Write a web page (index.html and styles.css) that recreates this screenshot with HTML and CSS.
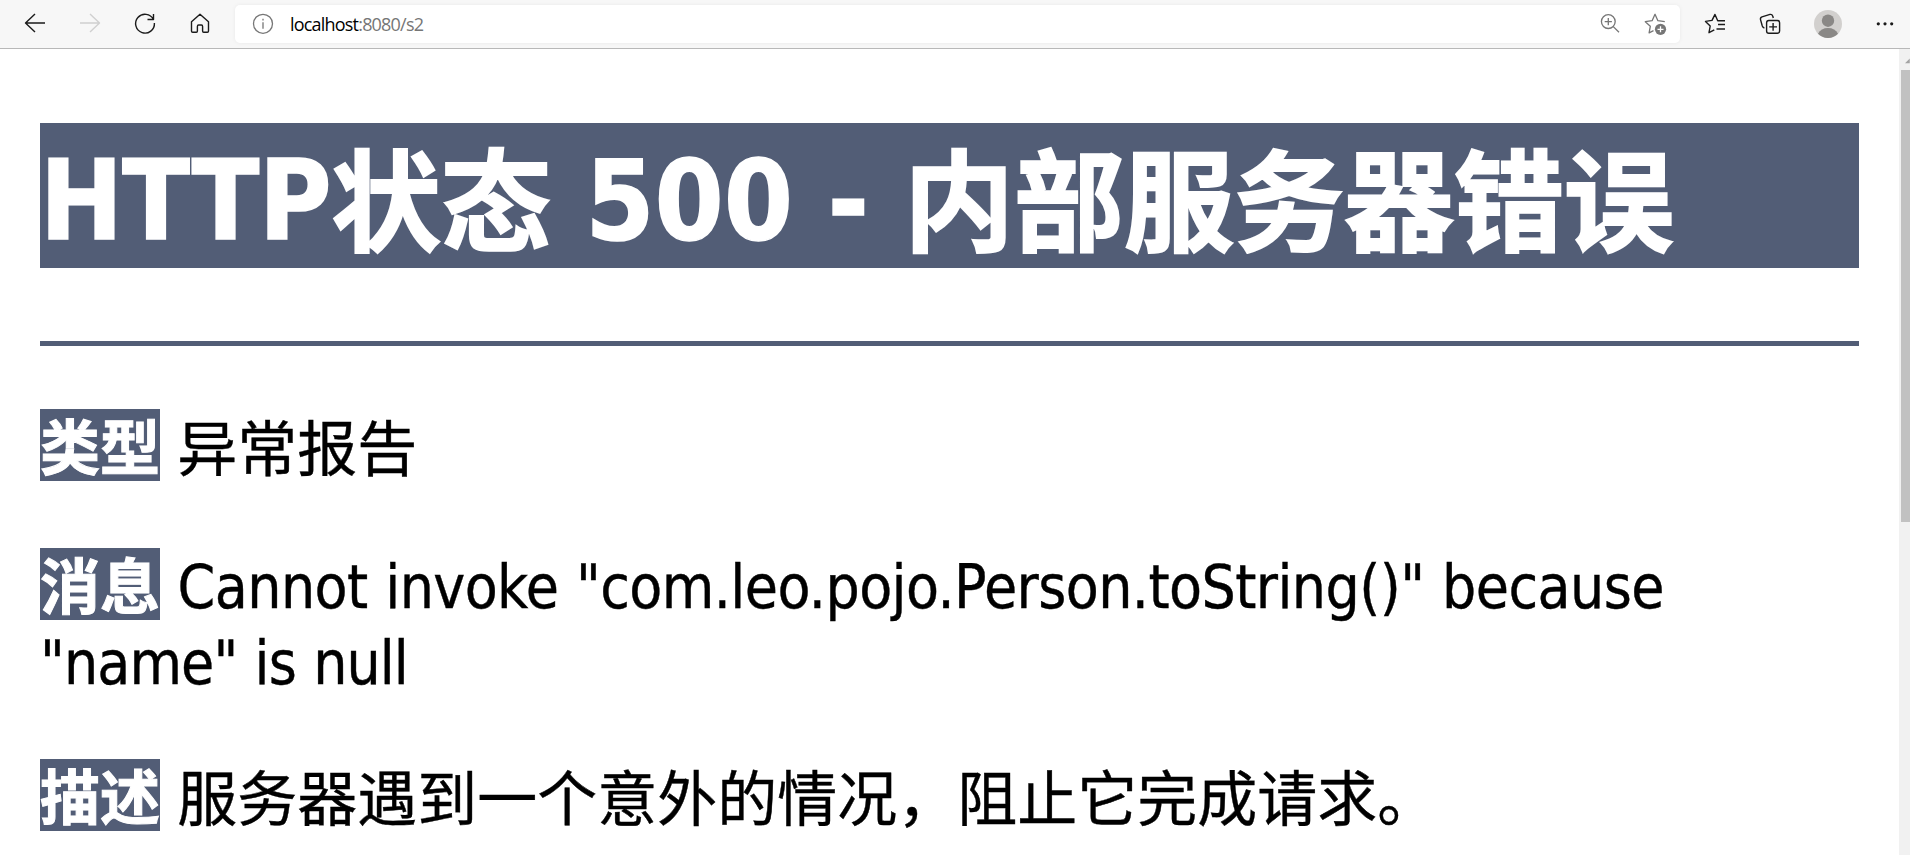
FILE: index.html
```html
<!DOCTYPE html>
<html lang="zh">
<head>
    <meta charset="UTF-8">
    <title>HTTP状态 500 - 内部服务器错误</title>
    <link rel="stylesheet" href="styles.css">
</head>
<body>
    <header class="toolbar">
        <nav class="nav-buttons">
            <svg class="icon" viewBox="0 0 24 24"><path d="M22 11H2.5M12 2L2.5 11L12 20"/></svg>
            <svg class="icon disabled" viewBox="0 0 24 24"><path d="M2 11H21.5M12 2L21.5 11L12 20"/></svg>
            <svg class="icon" viewBox="0 0 24 24"><path d="M20.4 7.4A9.4 9.4 0 1 0 21.4 11M20.5 2V7.5H14.5"/></svg>
            <svg class="icon" viewBox="0 0 24 24"><path d="M3.5 9.8L12 2.2L20.5 9.8V19Q20.5 20.2 19.3 20.2H15.7Q14.6 20.2 14.6 19V14.5Q14.6 13 13.4 13H10.6Q9.4 13 9.4 14.5V19Q9.4 20.2 8.3 20.2H4.7Q3.5 20.2 3.5 19Z"/></svg>
        </nav>

        <div class="address-bar">
            <svg class="icon small" viewBox="0 0 24 24"><circle cx="12" cy="11.8" r="9.5"/><path d="M12 10.3V16.8M12 6.8V8.4"/></svg>
            <div class="url">localhost<span class="url-path">:8080/s2</span></div>
            <svg class="icon small" viewBox="0 0 24 24"><circle cx="11.3" cy="9.6" r="6.9"/><path d="M16.3 14.6L22 20.2M11.3 6V13.2M7.7 9.6H14.9"/></svg>
            <svg class="icon small" viewBox="0 0 24 24"><path d="M21.8 9.7L14.9 8.7L12 2.3L9.1 8.7L2.3 9.7L7.3 14.3L6.1 20.8L10.5 18.6"/><circle class="solid" cx="17.5" cy="17.3" r="5.6"/><path class="plus" d="M17.5 14.3V20.3M14.5 17.3H20.5"/></svg>
        </div>

        <div class="actions">
            <svg class="icon" viewBox="0 0 24 24"><path d="M22 8.8H14.7L12 2.4L9 8.4L2.5 9.4L7.2 14L6 20.7L11.3 17.8M15 12.5H22M13.5 17H22"/></svg>
            <svg class="icon" viewBox="0 0 24 24"><rect x="8.6" y="8.5" width="13" height="12.7" rx="2.2"/><path d="M15.1 11V18.8M11.2 14.9H19M6.4 16.2Q4.8 15.6 4.3 14L2.5 7.6Q2.1 5.6 4 4.9L12 2.4Q14 2 14.8 4.2L15.3 6"/></svg>
            <svg class="avatar" viewBox="0 0 28 28"><circle cx="14" cy="14" r="14" fill="#d2d0ce"/><circle cx="14" cy="10.7" r="6.2" fill="#8a8886"/><path d="M4 23.8Q7 18 14 18T24 23.8A14 14 0 0 1 4 23.8Z" fill="#8a8886"/></svg>
            <svg class="icon dots" viewBox="0 0 24 24"><circle cx="5.3" cy="11.8" r="1.6"/><circle cx="12" cy="11.8" r="1.6"/><circle cx="18.7" cy="11.8" r="1.6"/></svg>
        </div>
    </header>

    <div class="viewport">
        <main class="report">
            <h1>HTTP<span class="han">状态</span><span class="code"> 500 - </span><span class="han">内部服务器错误</span></h1>
            <hr class="line">
            <p><b>类型</b> 异常报告</p>
            <p class="message"><b>消息</b> Cannot invoke "com.leo.pojo.Person.toString()" because<br><span class="rest">"name" is null</span></p>
            <p><b>描述</b> 服务器遇到一个意外的情况，阻止它完成请求。</p>
        </main>
        <div class="scrollbar">
            <svg class="scroll-arrow" viewBox="0 0 11 22"><path d="M6 15L11 10V15Z"/></svg>
            <div class="scroll-thumb"></div>
        </div>
    </div>
</body>
</html>
```

FILE: styles.css
```css
* {
    box-sizing: border-box;
    margin: 0;
    padding: 0;
}

body {
    height: 855px;
    overflow: hidden;
    background-color: white;
    font-family: "DejaVu Sans Condensed", "DejaVu Sans", "Noto Sans CJK SC", sans-serif;
    font-stretch: condensed;
}

.toolbar {
    display: flex;
    align-items: center;
    height: 49px;
    padding-left: 23px;
    background-color: #f7f7f7;
    border-bottom: 1px solid #b8b8b8;
}

.nav-buttons {
    display: flex;
    gap: 31px;
}

.icon {
    width: 24px;
    height: 24px;
    flex: none;
    fill: none;
    stroke: #1b1b1b;
    stroke-width: 1.4;
    stroke-linejoin: round;
}

.icon.disabled {
    stroke: #d0d0d0;
}

.icon.small {
    stroke: #767676;
    stroke-width: 1.3;
}

.icon .solid {
    fill: #767676;
    stroke: none;
}

.icon .plus {
    stroke: white;
}

.icon.dots {
    fill: #1b1b1b;
    stroke: none;
}

.address-bar {
    display: flex;
    align-items: center;
    width: 1445px;
    height: 38px;
    margin-left: 23px;
    padding: 0 13px 0 16px;
    gap: 22px;
    background-color: white;
    border-radius: 5px;
    box-shadow: 0 0 4px rgba(0,0,0,0.06);
}

.url {
    flex: 1;
    margin-left: -7px;
    padding-bottom: 1px;
    font-family: "Open Sans", sans-serif;
    font-stretch: normal;
    font-size: 18px;
    letter-spacing: -0.8px;
    color: black;
}

.url-path {
    color: #767676;
}

.actions {
    display: flex;
    align-items: center;
    gap: 31px;
    margin-left: 23px;
}

.avatar {
    width: 28px;
    height: 28px;
    margin-left: 1px;
}

.viewport {
    display: flex;
    height: 806px;
}

.report {
    width: 1899px;
    padding: 74px 40px 0;
}

h1 {
    height: 145px;
    line-height: 156px;
    font-size: 110px;
    letter-spacing: -0.5px;
    white-space: nowrap;
    color: white;
    background-color: #525d76;
    -webkit-text-stroke: 1.5px white;
}

.han {
    line-height: 1;
    letter-spacing: 0;
    vertical-align: -4px;
    -webkit-text-stroke: 2px white;
}

.code {
    letter-spacing: 0.3px;
}

.line {
    height: 5px;
    margin: 73px 0 64px;
    border: none;
    background-color: #525d76;
}

p {
    margin-bottom: 59px;
    font-size: 60px;
    line-height: 80px;
    white-space: nowrap;
    color: black;
    -webkit-text-stroke: 0.4px black;
}

p.message {
    line-height: 76px;
    letter-spacing: -0.56px;
    word-spacing: 1px;
}

.rest {
    letter-spacing: -0.9px;
}

b {
    display: inline-block;
    width: 120px;
    height: 72px;
    margin-top: -1px;
    line-height: 80px;
    letter-spacing: 0;
    vertical-align: top;
    color: white;
    background-color: #525d76;
    -webkit-text-stroke: 1px white;
}

.scrollbar {
    width: 11px;
    padding-left: 2px;
    background-color: #f1f1f1;
}

.scroll-arrow {
    display: block;
    width: 11px;
    height: 21px;
    margin-left: -2px;
    fill: #a3a3a3;
}

.scroll-thumb {
    height: 452px;
    background-color: #c1c1c1;
}
```
